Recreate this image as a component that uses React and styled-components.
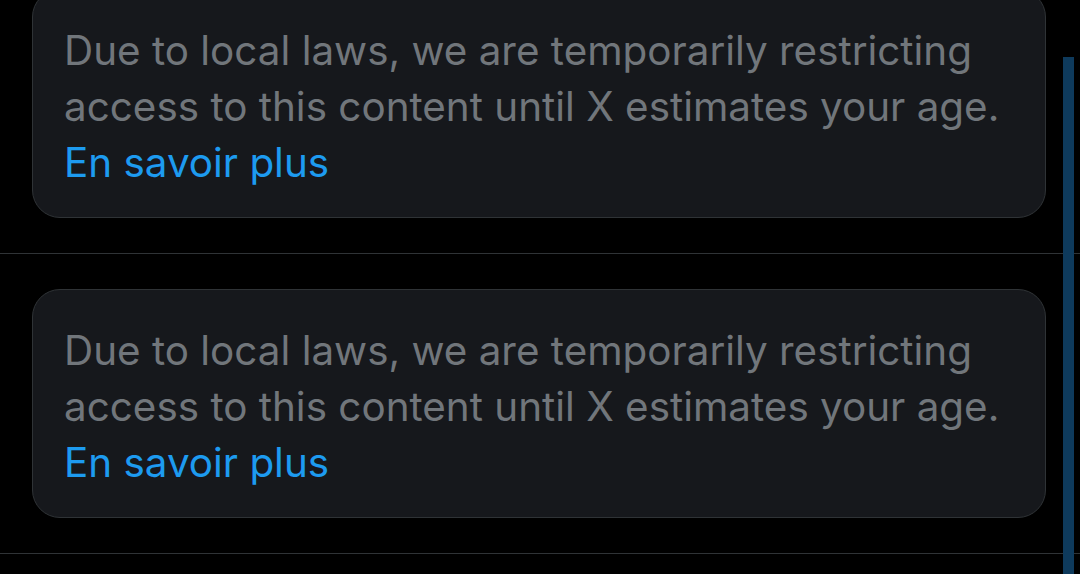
import React from "react";
import styled, { createGlobalStyle } from "styled-components";

const Global = createGlobalStyle`
  html, body { margin: 0; padding: 0; background: #000; }
  body { font-family: Inter, "Noto Sans", sans-serif; overflow: hidden; }
`;

const Page = styled.div`
  position: relative;
  height: 574px;
  overflow: hidden;
  background: #000;
`;

const Feed = styled.div`
  margin-top: -46px;
`;

const Row = styled.div`
  padding: 35px 34px 35px 32px;
  border-bottom: 1px solid #2f3336;
`;

const Card = styled.div`
  background: #16181c;
  border: 1px solid #2f3336;
  border-radius: 28px;
  padding: 33px 30px 30px 31px;
  box-sizing: border-box;
  height: 229px;
`;

const Notice = styled.p`
  margin: 0;
  font-family: Inter, "Noto Sans", sans-serif;
  font-size: 40.4px;
  line-height: 56px;
  color: #71767b;
`;

const Link = styled.a`
  display: block;
  color: #1d9bf0;
  text-decoration: none;
`;

const Thumb = styled.div`
  position: absolute;
  left: 1063px;
  top: 57px;
  width: 11px;
  bottom: 0;
  background: #0e3a5c;
`;

function Item() {
  return (
    <Row>
      <Card>
        <Notice>
          Due to local laws, we are temporarily restricting access to this content until X estimates your age.
          <Link href="#">En savoir plus</Link>
        </Notice>
      </Card>
    </Row>
  );
}

export default function App() {
  return (
    <Page>
      <Global />
      <Feed>
        <Item />
        <Item />
      </Feed>
      <Thumb />
    </Page>
  );
}
